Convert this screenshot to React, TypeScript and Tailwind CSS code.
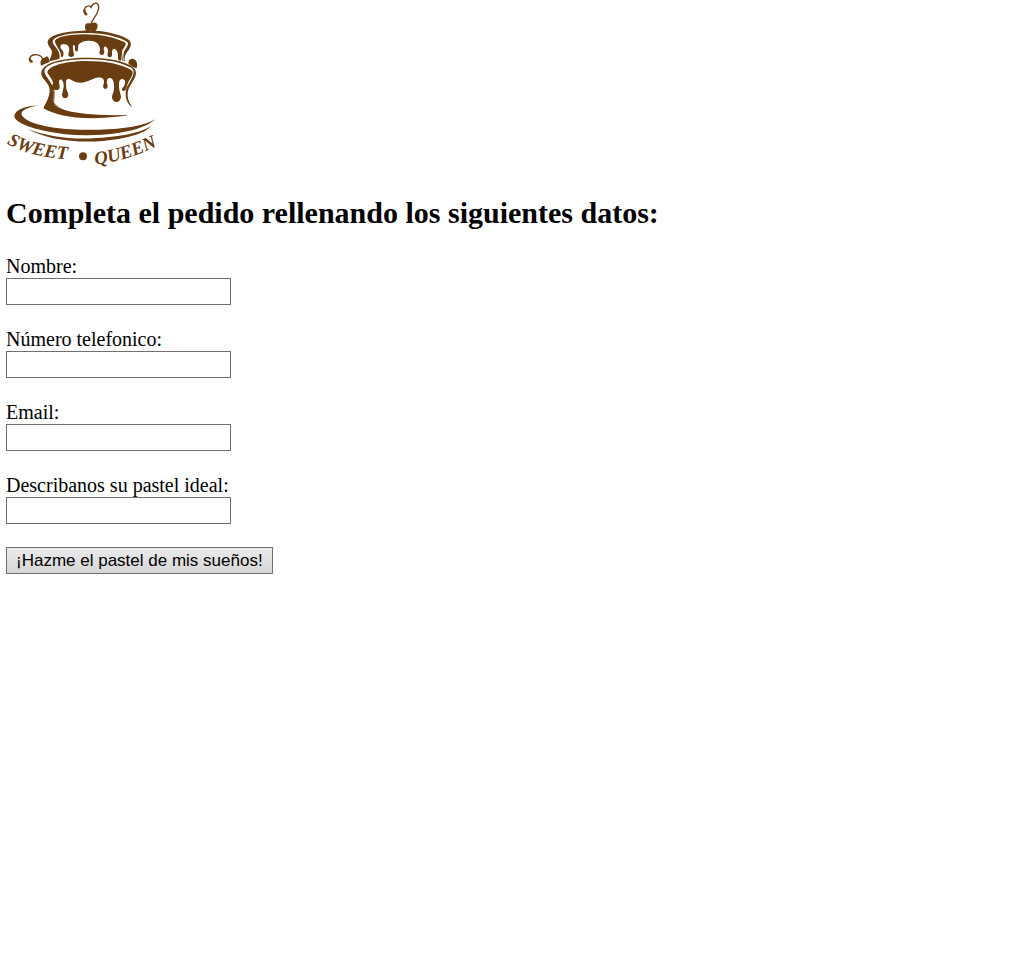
import type { FormEvent } from "react";

const fields = [
  { id: "nombre", label: "Nombre:", type: "text" },
  { id: "telefono", label: "Número telefonico:", type: "tel" },
  { id: "email", label: "Email:", type: "email" },
  { id: "descripcion", label: "Describanos su pastel ideal:", type: "text" },
];

function Logo() {
  return (
    <svg
      viewBox="18 6 456 492"
      className="block h-[164px] w-[152px] overflow-visible"
      fill="#693c11"
      role="img"
      aria-label="Sweet Queen"
    >
      {/* Heart stem and top cherry */}
      <g fill="none" stroke="#693c11" strokeLinecap="round">
        <path d="M273 70C279 57 298 37 296 19C294 4 279 7 273 22C267 13 253 19 253 32" strokeWidth="4" />
        <path d="M253 31C253 38 255 41 259 43" strokeWidth="7" />
      </g>
      <path d="M257 73C262 67 269 72 274 70C281 65 292 68 293 76C293 83 290 90 286 94C276 92 267 92 259 94C255 87 253 78 257 73Z" />

      {/* Upper tier */}
      <path d="M143 128C142 107 185 94 247 92C306 90 350 100 381 116C393 122 395 132 390 143C382 158 372 162 374 184L366 182C365 158 374 155 383 136C386 129 383 126 376 122C343 105 298 98 247 99C202 100 171 107 160 119C154 127 163 136 170 145C178 157 181 165 178 177L148 184C149 175 156 167 156 156C156 147 144 139 143 128Z" />
      <path d="M164 123C173 109 207 104 253 103C306 103 343 112 374 127C382 132 374 140 367 151L364 179C360 185 354 181 354 173C355 160 352 151 345 147C337 144 336 152 336 160C338 171 331 174 326 171C321 168 322 163 324 156C326 142 311 132 311 148C315 159 312 165 306 165C299 165 296 159 300 151C301 139 294 126 276 123C260 121 242 125 235 135L234 148C236 155 227 157 225 150L225 138C220 132 218 136 219 148L222 163C224 174 203 174 205 163L208 149C208 137 200 132 190 133C180 133 181 139 182 145C192 154 193 166 187 171L181 170C182 151 169 141 164 123Z" />
      <path d="M164 121C158 130 174 144 179 156C182 164 182 170 180 179M380 127C383 134 370 149 370 158C368 166 369 174 370 182" fill="none" stroke="white" strokeWidth="3" />

      {/* Side cherries */}
      <path d="M124 180C128 170 134 178 140 168C145 171 148 178 149 186C140 190 132 193 123 197C121 191 121 184 124 180Z" />
      <path d="M388 181C392 174 405 175 409 184C411 190 413 195 410 204C402 204 397 199 389 195C383 191 385 185 388 181Z" />
      <path d="M127 175C124 166 111 162 99 165C88 169 85 179 95 185" fill="none" stroke="#693c11" strokeWidth="4" strokeLinecap="round" />
      <path d="M89 178C90 182 92 184 95 185" fill="none" stroke="#693c11" strokeWidth="7" strokeLinecap="round" />

      {/* Lower tier */}
      <path d="M124 222C121 190 181 174 260 173C326 172 371 183 397 200C410 209 411 222 402 238C388 261 381 269 383 291C385 304 390 311 395 321C384 310 377 300 377 281C376 260 392 247 399 226C405 209 396 203 382 198C351 183 306 178 257 178C197 179 147 189 135 207C127 221 147 235 156 252C166 274 159 292 161 307C163 329 225 347 382 346C255 364 178 352 130 325C137 309 149 293 149 271C149 249 126 239 124 222Z" />
      <path d="M142 218C144 199 188 184 257 183C320 183 365 193 394 210C401 215 398 225 392 235C385 242 382 256 378 268C374 276 365 274 366 266C374 258 379 246 373 240C367 234 357 237 357 251C356 274 363 281 363 292C361 311 338 310 336 293C336 281 344 276 342 255C341 238 333 230 323 236C318 244 322 250 323 258C322 270 310 269 309 259C314 248 313 237 306 234C284 227 269 248 241 248C223 248 214 237 205 236C194 239 199 251 199 266C202 275 205 279 205 286C203 298 187 297 186 286C186 277 191 272 191 255C191 244 184 234 178 240C175 248 180 256 179 264C174 274 160 271 157 263C159 252 160 247 156 239Z" />
      <path d="M140 214C133 225 151 239 157 255" fill="none" stroke="white" strokeWidth="3" />
      <path d="M381 346C250 357 182 338 161 307C163 284 166 270 156 252" fill="none" stroke="#693c11" strokeWidth="2" />
      <path d="M404 222C402 241 381 259 380 282C380 299 386 309 394 319" fill="none" stroke="#693c11" strokeWidth="3" />

      {/* Plate */}
      <path d="M117 316C78 318 44 329 43 348C43 365 84 382 136 393C202 408 284 409 354 399C411 391 449 374 467 357C433 378 371 387 298 389C213 392 118 382 80 359C50 341 65 325 117 316Z" />
      <path d="M82 386C155 415 240 421 326 411C387 405 428 395 453 378C431 404 374 416 309 423C224 430 135 417 82 386Z" />

      {/* Brand lettering follows the curve of the plate */}
      <path id="curve-left" d="M20 430Q102 479 250 479" fill="none" />
      <path id="curve-right" d="M286 494Q386 484 500 424" fill="none" />
      <g fontFamily="'Liberation Serif', serif" fontStyle="italic" fontWeight="700" fontSize="56">
        <text>
          <textPath href="#curve-left">SWEET</textPath>
        </text>
        <text>
          <textPath href="#curve-right">QUEEN</textPath>
        </text>
      </g>
      <circle cx="249" cy="469" r="12" />
    </svg>
  );
}

export default function App() {
  const handleSubmit = (event: FormEvent<HTMLFormElement>) => event.preventDefault();

  return (
    <main className="min-h-screen bg-white px-1.5 pt-0.5 font-['Liberation_Serif',serif] text-black">
      <Logo />
      <h2 className="mt-[29px] text-[30px] leading-9 font-bold">
        Completa el pedido rellenando los siguientes datos:
      </h2>
      <form className="mt-6 flex flex-col items-start gap-[23px]" onSubmit={handleSubmit}>
        {fields.map((field) => (
          <div key={field.id} className="flex flex-col items-start">
            <label htmlFor={field.id} className="text-[20px] leading-[23px]">
              {field.label}
            </label>
            <input
              id={field.id}
              name={field.id}
              type={field.type}
              className="h-[27px] w-[225px] border border-[#707070] bg-white px-1 font-['Liberation_Sans',sans-serif] text-[17px]"
            />
          </div>
        ))}
        <button
          type="submit"
          className="h-[27px] border border-[#707070] bg-linear-to-b from-[#ebebeb] to-[#d6d6d6] px-[9px] font-['Liberation_Sans',sans-serif] text-[17px] leading-[25px]"
        >
          ¡Hazme el pastel de mis sueños!
        </button>
      </form>
    </main>
  );
}
